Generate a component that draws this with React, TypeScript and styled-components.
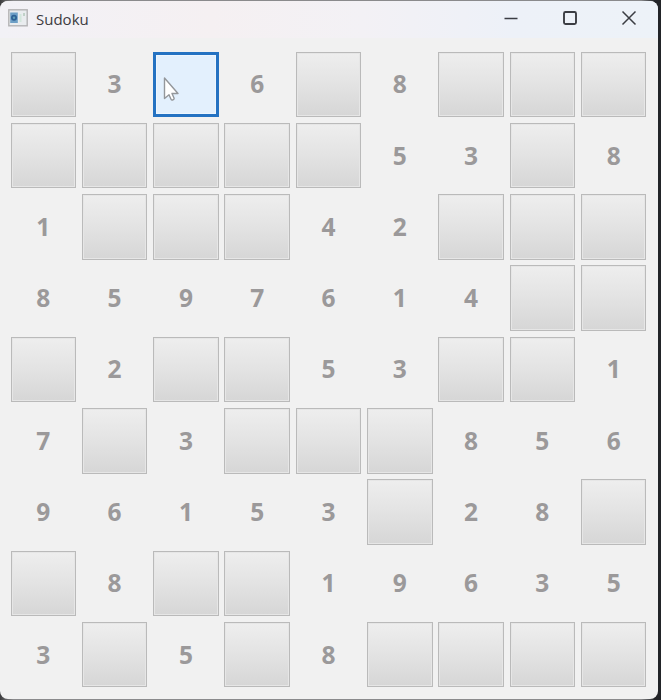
import React from "react";
import styled, { createGlobalStyle, css } from "styled-components";

const GlobalStyle = createGlobalStyle`
  * { box-sizing: border-box; }
  body { margin: 0; background: #222326; overflow: hidden; }
`;

const Desktop = styled.div`
  width: 661px;
  height: 700px;
  padding: 1px 3px 1px 0;
  background: linear-gradient(90deg, #3c3c3e 0, #8a8a8c 2%, #8a8a8c 97%, #222428 99%);
`;

const Window = styled.main`
  width: 658px;
  height: 698px;
  border-radius: 8px;
  overflow: hidden;
  background: #f1f1f1;
  font-family: "Open Sans", "Noto Sans", sans-serif;
`;

const TitleBar = styled.header`
  height: 37px;
  display: flex;
  align-items: center;
  padding: 0 0 3px 8px;
  background: linear-gradient(90deg, #f2f1f6 0%, #f5f0f2 32%, #f3f1f5 55%, #edf1f8 78%, #edf2f8 100%);
`;

const Title = styled.h1`
  flex: 1;
  margin: 1px 0 0 8px;
  font-size: 15px;
  font-weight: 500;
  line-height: 20px;
  color: #3c3b3f;
`;

const Controls = styled.div`
  display: flex;
  align-items: center;
`;

const ControlButton = styled.button`
  width: 59px;
  height: 34px;
  padding: 0;
  border: 0;
  background: transparent;
  display: grid;
  place-items: center;
  color: #3b3d43;
`;

const Board = styled.section`
  display: grid;
  grid-template-columns: repeat(9, 1fr);
  grid-template-rows: repeat(9, 1fr);
  gap: 5.6px;
  width: 636px;
  height: 636px;
  margin: 13.5px 0 0 10.5px;
`;

const Given = styled.div`
  display: grid;
  place-items: center;
  font-size: 24.5px;
  font-weight: 700;
  line-height: 32px;
  color: #9b999a;
`;

const Blank = styled.button<{ $active?: boolean }>`
  min-width: 0;
  padding: 0;
  border: 1px solid #bababa;
  background: linear-gradient(#eeeeee, #e4e4e4 45%, #d6d6d6);
  box-shadow: inset 0 0 0 1px #e6e6e6;
  ${({ $active }) =>
    $active &&
    css`
      position: relative;
      border: 3px solid #2472c2;
      background: #e3f0fd;
      box-shadow: inset 0 0 0 1px #edf6ff;
    `}
`;

const Pointer = styled.svg`
  position: absolute;
  left: 7px;
  top: 21px;
`;

const rows = [
  "03*608000",
  "000005308",
  "100042000",
  "859761400",
  "020053001",
  "703000856",
  "961530280",
  "080019635",
  "305080000",
];

function AppIcon() {
  return (
    <svg width="20" height="18" viewBox="0 0 20 18" aria-hidden="true">
      <rect x="0.8" y="0.8" width="18.4" height="16" fill="#e9ecef" stroke="#b4b3b6" strokeWidth="1.4" />
      <rect x="2.2" y="3.5" width="7.6" height="10.5" fill="#6d9fc6" />
      <circle cx="6" cy="8.800" r="3" fill="#2f6296" />
      <circle cx="6" cy="8.800" r="1.200" fill="#5f9fb8" />
      <path d="M12.5 5v8" stroke="#d2e6dc" strokeWidth="2" />
      <path d="M16 4v3" stroke="#a5c0ad" strokeWidth="1.2" />
    </svg>
  );
}

function Cursor() {
  return (
    <Pointer width="18" height="28" viewBox="0 0 18 28" aria-hidden="true">
      <path
        d="M1.500 2v20.500l4.500-3.700 2 4.400c.7 1.500 3.700.5 3-1.200l-2-4.500h6z"
        fill="#fff"
        stroke="#94979b"
        strokeWidth="1.400"
        strokeLinejoin="round"
      />
    </Pointer>
  );
}

export default function App() {
  return (
    <>
      <GlobalStyle />
      <Desktop>
        <Window>
          <TitleBar>
            <AppIcon />
            <Title>Sudoku</Title>
            <Controls>
              <ControlButton aria-label="Minimize">
                <svg width="16" height="16" viewBox="0 0 16 16" fill="none" stroke="currentColor">
                  <path d="M1.500 8.500h13" strokeWidth="1.500" />
                </svg>
              </ControlButton>
              <ControlButton aria-label="Maximize">
                <svg width="16" height="16" viewBox="0 0 16 16" fill="none" stroke="currentColor">
                  <rect x="2" y="2" width="12" height="12" rx="1.500" strokeWidth="1.900" />
                </svg>
              </ControlButton>
              <ControlButton aria-label="Close">
                <svg width="16" height="16" viewBox="0 0 16 16" fill="none" stroke="currentColor">
                  <path d="M1.500 1.500l13 13M14.500 1.500l-13 13" strokeWidth="1.500" />
                </svg>
              </ControlButton>
            </Controls>
          </TitleBar>
          <Board>
            {rows.flatMap((row, r) =>
              [...row].map((value, c) => {
                const key = `${r}-${c}`;
                if (value === "0") return <Blank key={key} />;
                if (value === "*")
                  return (
                    <Blank key={key} $active>
                      <Cursor />
                    </Blank>
                  );
                return <Given key={key}>{value}</Given>;
              }),
            )}
          </Board>
        </Window>
      </Desktop>
    </>
  );
}
